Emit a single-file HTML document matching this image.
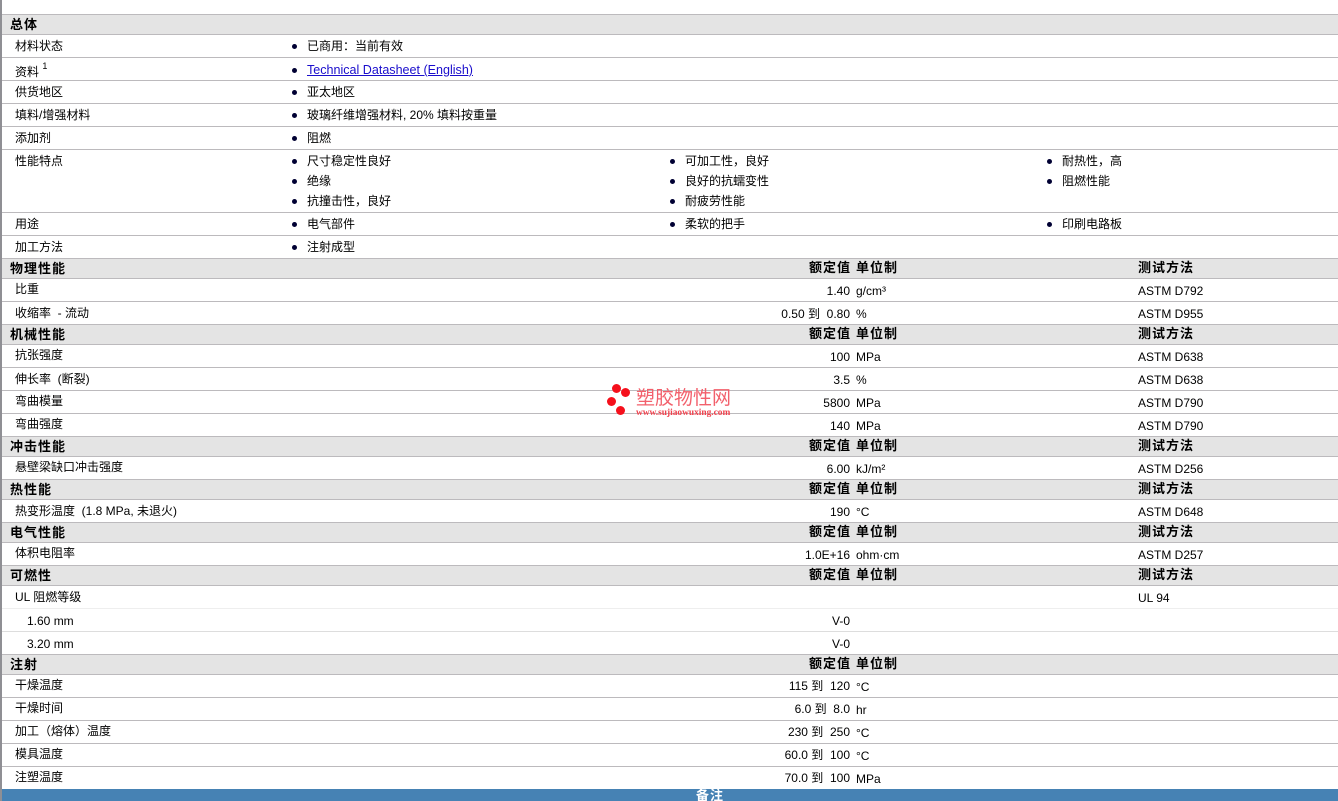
<!DOCTYPE html>
<html><head><meta charset="utf-8"><title>总体</title>
<style>
html,body{margin:0;padding:0;background:#fff}
#p{position:relative;width:1338px;height:801px;overflow:hidden;background:#fff;font:12px/14px "Liberation Sans","WenQuanYi Zen Hei","Noto Sans CJK SC",sans-serif;color:#000}
#p div{position:absolute}
.b{left:2px;right:0;height:1px;background:#bcbabd}
.g{left:2px;right:0;background:#e4e4e4}
.t{white-space:nowrap}
.h{font-weight:bold;font-size:13px;letter-spacing:1px;color:#000;white-space:nowrap}
.l{left:15px;white-space:nowrap}
.v{right:488px;white-space:nowrap;text-align:right}
.h.v{right:487px}
.u{left:856px;white-space:nowrap}
.m{left:1138px;white-space:nowrap}
.d{width:5px;height:5px;border-radius:50%;background:#000033}
.w{border-radius:50%;background:#f5101c}
a{color:#1a0dcc;text-decoration:underline;font-size:12.55px}
</style></head><body><div id="p">
<div style="left:0;top:0;width:2px;height:801px;background:#8f8f94"></div>

<div class="g" style="top:14px;height:21px"></div>
<div class="g" style="top:258px;height:21px"></div>
<div class="g" style="top:324px;height:21px"></div>
<div class="g" style="top:436px;height:21px"></div>
<div class="g" style="top:479px;height:21px"></div>
<div class="g" style="top:522px;height:21px"></div>
<div class="g" style="top:565px;height:21px"></div>
<div class="g" style="top:654px;height:21px"></div>

<div class="b" style="top:14px"></div><div class="b" style="top:34px"></div><div class="b" style="top:57px"></div><div class="b" style="top:80px"></div><div class="b" style="top:103px"></div><div class="b" style="top:126px"></div><div class="b" style="top:149px"></div><div class="b" style="top:212px"></div><div class="b" style="top:235px"></div><div class="b" style="top:258px"></div><div class="b" style="top:278px"></div><div class="b" style="top:301px"></div><div class="b" style="top:324px"></div><div class="b" style="top:344px"></div><div class="b" style="top:367px"></div><div class="b" style="top:390px"></div><div class="b" style="top:413px"></div><div class="b" style="top:436px"></div><div class="b" style="top:456px"></div><div class="b" style="top:479px"></div><div class="b" style="top:499px"></div><div class="b" style="top:522px"></div><div class="b" style="top:542px"></div><div class="b" style="top:565px"></div><div class="b" style="top:585px"></div><div class="b" style="top:608px;background:#eee"></div><div class="b" style="top:631px;background:#ddd"></div><div class="b" style="top:654px"></div><div class="b" style="top:674px"></div><div class="b" style="top:697px"></div><div class="b" style="top:720px"></div><div class="b" style="top:743px"></div><div class="b" style="top:766px"></div>

<div class="h" style="left:10px;top:18px">总体</div>
<div class="l" style="top:39px">材料状态</div>
<div class="l" style="top:65px">资料 <span style="font-size:9px;position:relative;top:-7px">1</span></div>
<div class="l" style="top:85px">供货地区</div>
<div class="l" style="top:108px">填料/增强材料</div>
<div class="l" style="top:131px">添加剂</div>
<div class="l" style="top:154px">性能特点</div>
<div class="l" style="top:217px">用途</div>
<div class="l" style="top:240px">加工方法</div>

<div class="d" style="left:292px;top:44px"></div><div class="t" style="left:307px;top:39px">已商用：当前有效</div>
<div class="d" style="left:292px;top:68px"></div><div class="t" style="left:307px;top:63px"><a href="#">Technical Datasheet (English)</a></div>
<div class="d" style="left:292px;top:90px"></div><div class="t" style="left:307px;top:85px">亚太地区</div>
<div class="d" style="left:292px;top:113px"></div><div class="t" style="left:307px;top:108px">玻璃纤维增强材料, 20% 填料按重量</div>
<div class="d" style="left:292px;top:136px"></div><div class="t" style="left:307px;top:131px">阻燃</div>
<div class="d" style="left:292px;top:159px"></div><div class="t" style="left:307px;top:154px">尺寸稳定性良好</div>
<div class="d" style="left:292px;top:179px"></div><div class="t" style="left:307px;top:174px">绝缘</div>
<div class="d" style="left:292px;top:199px"></div><div class="t" style="left:307px;top:194px">抗撞击性，良好</div>
<div class="d" style="left:292px;top:222px"></div><div class="t" style="left:307px;top:217px">电气部件</div>
<div class="d" style="left:292px;top:245px"></div><div class="t" style="left:307px;top:240px">注射成型</div>

<div class="d" style="left:670px;top:159px"></div><div class="t" style="left:685px;top:154px">可加工性，良好</div>
<div class="d" style="left:670px;top:179px"></div><div class="t" style="left:685px;top:174px">良好的抗蠕变性</div>
<div class="d" style="left:670px;top:199px"></div><div class="t" style="left:685px;top:194px">耐疲劳性能</div>
<div class="d" style="left:670px;top:222px"></div><div class="t" style="left:685px;top:217px">柔软的把手</div>

<div class="d" style="left:1047px;top:159px"></div><div class="t" style="left:1062px;top:154px">耐热性，高</div>
<div class="d" style="left:1047px;top:179px"></div><div class="t" style="left:1062px;top:174px">阻燃性能</div>
<div class="d" style="left:1047px;top:222px"></div><div class="t" style="left:1062px;top:217px">印刷电路板</div>

<div class="h" style="left:10px;top:262px">物理性能</div><div class="h v" style="top:261px">额定值</div><div class="h u" style="top:261px">单位制</div><div class="h m" style="top:261px">测试方法</div>
<div class="l" style="top:282px">比重</div><div class="v" style="top:284px">1.40</div><div class="u" style="top:284px">g/cm³</div><div class="m" style="top:284px">ASTM D792</div>
<div class="l" style="top:306px">收缩率 &nbsp;- 流动</div><div class="v" style="top:307px">0.50 到 &nbsp;0.80</div><div class="u" style="top:307px">%</div><div class="m" style="top:307px">ASTM D955</div>

<div class="h" style="left:10px;top:328px">机械性能</div><div class="h v" style="top:327px">额定值</div><div class="h u" style="top:327px">单位制</div><div class="h m" style="top:327px">测试方法</div>
<div class="l" style="top:348px">抗张强度</div><div class="v" style="top:350px">100</div><div class="u" style="top:350px">MPa</div><div class="m" style="top:350px">ASTM D638</div>
<div class="l" style="top:372px">伸长率 &nbsp;(断裂)</div><div class="v" style="top:373px">3.5</div><div class="u" style="top:373px">%</div><div class="m" style="top:373px">ASTM D638</div>
<div class="l" style="top:394px">弯曲模量</div><div class="v" style="top:396px">5800</div><div class="u" style="top:396px">MPa</div><div class="m" style="top:396px">ASTM D790</div>
<div class="l" style="top:417px">弯曲强度</div><div class="v" style="top:419px">140</div><div class="u" style="top:419px">MPa</div><div class="m" style="top:419px">ASTM D790</div>

<div class="h" style="left:10px;top:440px">冲击性能</div><div class="h v" style="top:439px">额定值</div><div class="h u" style="top:439px">单位制</div><div class="h m" style="top:439px">测试方法</div>
<div class="l" style="top:460px">悬壁梁缺口冲击强度</div><div class="v" style="top:462px">6.00</div><div class="u" style="top:462px">kJ/m²</div><div class="m" style="top:462px">ASTM D256</div>

<div class="h" style="left:10px;top:483px">热性能</div><div class="h v" style="top:482px">额定值</div><div class="h u" style="top:482px">单位制</div><div class="h m" style="top:482px">测试方法</div>
<div class="l" style="top:504px">热变形温度 &nbsp;(1.8 MPa, 未退火)</div><div class="v" style="top:505px">190</div><div class="u" style="top:505px">°C</div><div class="m" style="top:505px">ASTM D648</div>

<div class="h" style="left:10px;top:526px">电气性能</div><div class="h v" style="top:525px">额定值</div><div class="h u" style="top:525px">单位制</div><div class="h m" style="top:525px">测试方法</div>
<div class="l" style="top:546px">体积电阻率</div><div class="v" style="top:548px">1.0E+16</div><div class="u" style="top:548px">ohm·cm</div><div class="m" style="top:548px">ASTM D257</div>

<div class="h" style="left:10px;top:569px">可燃性</div><div class="h v" style="top:568px">额定值</div><div class="h u" style="top:568px">单位制</div><div class="h m" style="top:568px">测试方法</div>
<div class="l" style="top:590px">UL 阻燃等级</div><div class="m" style="top:591px">UL 94</div>
<div class="l" style="left:27px;top:614px">1.60 mm</div><div class="v" style="top:614px">V-0</div>
<div class="l" style="left:27px;top:637px">3.20 mm</div><div class="v" style="top:637px">V-0</div>

<div class="h" style="left:10px;top:658px">注射</div><div class="h v" style="top:657px">额定值</div><div class="h u" style="top:657px">单位制</div>
<div class="l" style="top:678px">干燥温度</div><div class="v" style="top:679px">115 到 &nbsp;120</div><div class="u" style="top:680px">°C</div>
<div class="l" style="top:701px">干燥时间</div><div class="v" style="top:702px">6.0 到 &nbsp;8.0</div><div class="u" style="top:703px">hr</div>
<div class="l" style="top:724px">加工（熔体）温度</div><div class="v" style="top:725px">230 到 &nbsp;250</div><div class="u" style="top:726px">°C</div>
<div class="l" style="top:747px">模具温度</div><div class="v" style="top:748px">60.0 到 &nbsp;100</div><div class="u" style="top:749px">°C</div>
<div class="l" style="top:770px">注塑温度</div><div class="v" style="top:771px">70.0 到 &nbsp;100</div><div class="u" style="top:772px">MPa</div>

<div style="left:2px;right:0;top:789px;height:12px;background:#4682b4;overflow:hidden"><div class="h" style="left:694px;top:0;color:#fff">备注</div></div>

<div class="w" style="left:612px;top:384px;width:9px;height:9px"></div>
<div class="w" style="left:621px;top:388px;width:9px;height:9px"></div>
<div class="w" style="left:607px;top:397px;width:9px;height:9px"></div>
<div class="w" style="left:616px;top:406px;width:9px;height:9px"></div>
<div class="t" style="left:636px;top:389px;font-size:19px;line-height:20px;color:#f2606c">塑胶物性网</div>
<div class="t" style="left:636px;top:408px;font:bold 9.4px/10px 'Liberation Serif',serif;color:#f0404c">www.sujiaowuxing.com</div>
</div></body></html>
